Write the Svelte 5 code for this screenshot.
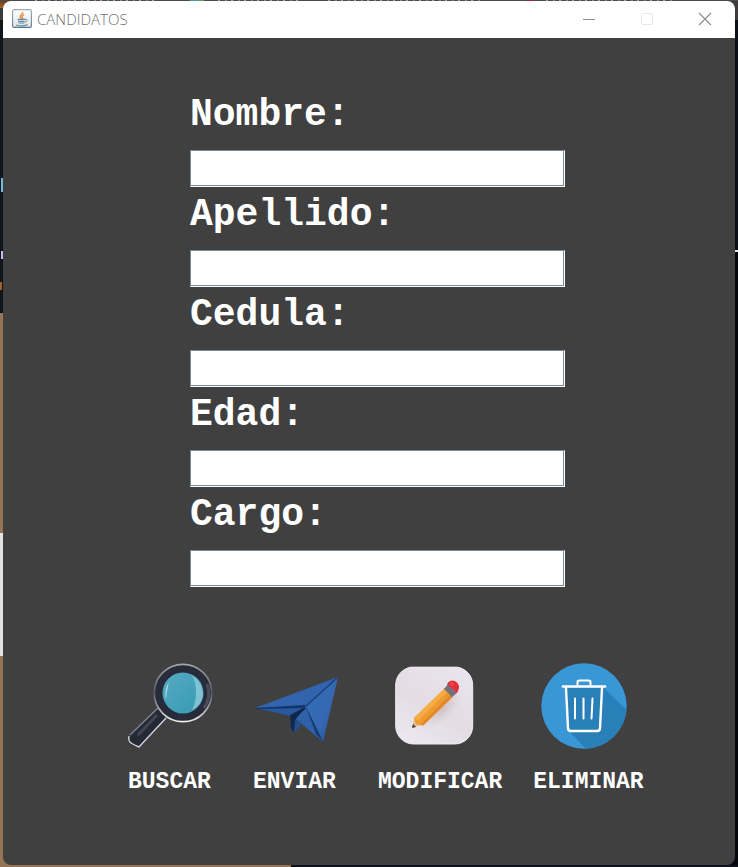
<script>
  const fields = [
    { id: 'nombre', label: 'Nombre:' },
    { id: 'apellido', label: 'Apellido:' },
    { id: 'cedula', label: 'Cedula:' },
    { id: 'edad', label: 'Edad:' },
    { id: 'cargo', label: 'Cargo:' }
  ];
  let values = $state({ nombre: '', apellido: '', cedula: '', edad: '', cargo: '' });
</script>

<div class="desktop">
  <main class="window">
    <header>
      <svg class="java" viewBox="0 0 20 20" aria-hidden="true">
        <defs>
          <linearGradient id="jbg" x1="0" y1="0" x2="0" y2="1">
            <stop offset="0" stop-color="#fff" /><stop offset="1" stop-color="#dfe3e6" />
          </linearGradient>
          <linearGradient id="jbd" x1="0" y1="0" x2="0" y2="1">
            <stop offset="0" stop-color="#9eacb6" /><stop offset="1" stop-color="#54748c" />
          </linearGradient>
        </defs>
        <rect x=".6" y=".6" width="18.8" height="17.8" rx="1.5" fill="url(#jbg)" stroke="url(#jbd)" stroke-width="1.1" />
        <path d="M10.7 3c.9 2-3.4 2.900-2.500 5 .3.800 1 1.400 1.300 2M12 5.800c-2 .8-2.500 1.700-1.600 2.700.6.700.4 1.200-.2 1.700" fill="none" stroke="#e79554" stroke-width="1.500" />
        <path d="M5.500 10.400h8M6 12.400h6.700M6.500 14h5.800M4 16c3 1 8.500.9 11.500-.4" fill="none" stroke="#67899f" stroke-width="1.200" />
        <path d="M13 10.300c3.300-.5 2.500 2.300 0 2.900" fill="none" stroke="#67899f" />
      </svg>
      <h1>CANDIDATOS</h1>
      <div class="controls">
        <button type="button" aria-label="Minimizar">
          <svg viewBox="0 0 14 14"><path d="M1 7.500h12" stroke="#8f8f8f" /></svg>
        </button>
        <button type="button" aria-label="Maximizar" disabled>
          <svg viewBox="0 0 14 14"><rect x="1.500" y="1.500" width="11" height="11" rx="1" fill="none" stroke="#e6e6e6" /></svg>
        </button>
        <button type="button" aria-label="Cerrar">
          <svg viewBox="0 0 14 14"><path d="M1 1l12 12M13 1L1 13" stroke="#8f8f8f" stroke-width="1.200" /></svg>
        </button>
      </div>
    </header>

    <form onsubmit={(e) => e.preventDefault()}>
      <div class="fields">
        {#each fields as f (f.id)}
          <div class="field">
            <label for={f.id}>{f.label}</label>
            <input id={f.id} type="text" autocomplete="off" bind:value={values[f.id]} />
          </div>
        {/each}
      </div>

      <div class="actions">
        <button type="button">
          <svg viewBox="0 0 84 88" aria-hidden="true">
            <defs>
              <linearGradient id="lens" x1="0" y1="0" x2="1" y2="1">
                <stop offset="0" stop-color="#55abc2" /><stop offset="1" stop-color="#3799b1" />
              </linearGradient>
              <linearGradient id="handle" x1="0" y1="0" x2="1" y2="1">
                <stop offset="0" stop-color="#555860" /><stop offset=".3" stop-color="#252a37" /><stop offset=".75" stop-color="#252936" /><stop offset="1" stop-color="#60646f" />
              </linearGradient>
              <linearGradient id="rim" x1="0" y1="0" x2="0" y2="1">
                <stop offset="0" stop-color="#a5a5a9" /><stop offset=".5" stop-color="#555861" /><stop offset="1" stop-color="#eeeeef" />
              </linearGradient>
            </defs>
            <path d="M30 46L2 73q-3 5 0 8 3 5 10 4L38 56z" fill="url(#handle)" />
            <path d="M30 46L2 73" stroke="#85878d" stroke-width="1.200" />
            <path d="M1 74q-1 5 2 7t8 4L38 56" fill="none" stroke="#d5d5d9" stroke-width="1.400" />
            <path d="M29 53L10 73" stroke="#414550" stroke-width="3" />
            <circle cx="55" cy="31" r="28.700" fill="#282b39" stroke="url(#rim)" stroke-width="1.700" />
            <path d="M79 22a26 26 0 0 1-3 24" fill="none" stroke="#4b4d5a" stroke-width="3" />
            <circle cx="55" cy="31" r="20.500" fill="url(#lens)" />
            <path d="M64 13q11 7 11 20-1 10-11 15 4-8 4-18 0-9-4-17z" fill="#7fc2d3" />
            <path d="M41 20q-5 7-3 18 1-12 3-18z" fill="#b4dde6" />
          </svg>
          <span>BUSCAR</span>
        </button>

        <button type="button">
          <svg viewBox="0 0 84 88" aria-hidden="true">
            <defs>
              <linearGradient id="wing" x1="0" y1="0" x2="1" y2="1">
                <stop offset="0" stop-color="#2f70b8" /><stop offset=".6" stop-color="#3568b0" /><stop offset="1" stop-color="#1e4d93" />
              </linearGradient>
            </defs>
            <path d="M2 46L85 15 52 47z" fill="#3164ac" />
            <path d="M2 46l51-2-15 10z" fill="#29599d" />
            <path d="M2 46l51-3v3L2 47z" fill="#123467" />
            <path d="M85 15L53 45l17 35z" fill="url(#wing)" />
            <path d="M38 53l15-9 16 35-25-21z" fill="#2f60a8" />
            <path d="M53 45l17 34-7-7z" fill="#163a71" />
            <path d="M37 53l15-8-9 12-2 14-3-5z" fill="#102953" />
            <path d="M42 58l7 4-8 9z" fill="#234e90" />
            <path d="M53 44L84 16" stroke="#163f79" stroke-width="1.300" />
            <path d="M52 46L38 58" stroke="#0e244b" stroke-width="2" />
          </svg>
          <span>ENVIAR</span>
        </button>

        <button type="button" class="wide">
          <svg viewBox="-17 0 84 88" aria-hidden="true">
            <defs>
              <linearGradient id="tile" x1=".8" y1="0" x2=".2" y2="1">
                <stop offset="0" stop-color="#eae4ed" /><stop offset=".55" stop-color="#e3dce3" /><stop offset="1" stop-color="#ebe8f1" />
              </linearGradient>
              <radialGradient id="shade">
                <stop offset="0" stop-color="#c7b6bb" stop-opacity=".8" /><stop offset="1" stop-color="#ded6dd" stop-opacity="0" />
              </radialGradient>
            </defs>
            <rect x=".7" y="5" width="77" height="77" rx="18" fill="url(#tile)" stroke="#f0edf1" />
            <path d="M15 4.500h47" stroke="#777a7d" />
            <ellipse cx="47" cy="47" rx="29" ry="13" transform="rotate(-42 47 47)" fill="url(#shade)" />
            <path d="M17 66l3-12 8 8z" fill="#e4bd85" />
            <path d="M17 66l1-4 3 3z" fill="#423b38" />
            <path d="M19 56l31-30 8 9-30 29-7-2z" fill="#ef9a31" />
            <path d="M19 56l31-30 3 3-30 30z" fill="#f6ac42" />
            <path d="M28 63l30-29-2-2-29 29z" fill="#df872c" />
            <path d="M49 27l4-5 9 9-5 4z" fill="#74717c" />
            <path d="M52 22q3-5 8-3 7 4 2 12z" fill="#e62c37" />
            <circle cx="57" cy="22" r="2" fill="#f0484e" />
          </svg>
          <span>MODIFICAR</span>
        </button>

        <button type="button">
          <svg viewBox="-8 0 84 88" aria-hidden="true">
            <defs><clipPath id="disc"><circle cx="43" cy="44" r="42.700" /></clipPath></defs>
            <circle cx="43" cy="44" r="42.700" fill="#3997d5" />
            <path d="M25 26h38l27 26v40H50L27 68z" fill="#2980b9" clip-path="url(#disc)" />
            <g fill="none" stroke="#fff" stroke-linecap="round" stroke-linejoin="round">
              <path d="M22 24.500h42" stroke-width="2.700" />
              <path d="M36.500 23v-3q0-1.500 1.500-1.500h10q1.500 0 1.500 1.500v3" stroke-width="2" />
              <path d="M25 26l2 40q0 3 3 3h26q3 0 3-3l2-40" stroke-width="2.400" />
              <path d="M34 36.500v20M42.500 36.500v20M51.500 36.500l-1 20" stroke-width="2" />
            </g>
          </svg>
          <span>ELIMINAR</span>
        </button>
      </div>
    </form>
  </main>
</div>

<style>
  :global(body) { margin: 0; }
  * { box-sizing: border-box; }

  .desktop {
    min-height: 100vh;
    padding: 1px 3px 2px;
    display: flex;
    background:
      linear-gradient(90deg, #957355 0 291px, #10111a 291px) bottom / 100% 2px no-repeat,
      repeating-linear-gradient(90deg, #aaa1a0 0 2px, #51494a 2px 7px, #7f8391 7px 9px, #51494a 9px 13px) 35px 0 / 120px 1px no-repeat,
      linear-gradient(90deg, #4b9ba5 0 10px, #789553 10px 14px) 190px 0 / 14px 1px no-repeat,
      repeating-linear-gradient(90deg, #aaa1a0 0 2px, #51494a 2px 7px, #7f8391 7px 9px, #51494a 9px 13px) 218px 0 / 84px 1px no-repeat,
      repeating-linear-gradient(90deg, #aaa1a0 0 2px, #51494a 2px 7px, #7f8391 7px 9px, #51494a 9px 13px) 328px 0 / 156px 1px no-repeat,
      linear-gradient(#a02c35, #a02c35) 527px 0 / 6px 1px no-repeat,
      repeating-linear-gradient(90deg, #aaa1a0 0 2px, #51494a 2px 7px, #7f8391 7px 9px, #51494a 9px 13px) 546px 0 / 130px 1px no-repeat,
      linear-gradient(#51494a, #51494a) top / 100% 1px no-repeat,
      linear-gradient(#e8e8e8, #e8e8e8) 735px 250px / 3px 2px no-repeat,
      linear-gradient(#70b7e2, #70b7e2) 1px 178px / 2px 14px no-repeat,
      linear-gradient(#c5b9e8, #c5b9e8) 1px 251px / 2px 8px no-repeat,
      linear-gradient(#a76127, #a76127) 0 282px / 2px 8px no-repeat,
      linear-gradient(#5b3a22, #a5662e) 0 0 / 12px 8px no-repeat,
      linear-gradient(#3d3b3c 0 20px, #10141b 20px 313px, #957355 313px 533px, #e1e4e1 533px 656px, #957355 656px) left / 50% 100% no-repeat,
      linear-gradient(#3d3b3c 0 20px, #0a1018 20px 250px, #04070e 250px) right / 50% 100% no-repeat;
  }

  .window {
    flex: 1;
    display: flex;
    flex-direction: column;
    overflow: hidden;
    border-radius: 8px;
    background: #404040;
  }

  header {
    display: flex;
    align-items: center;
    height: 37px;
    padding: 0 1px 2px 9px;
    background: #fff;
  }

  .java { width: 20px; height: 20px; }

  h1 {
    margin: 0 auto 0 5px;
    font: 300 15px/20px "Open Sans", "Noto Sans", sans-serif;
    color: #707070;
  }

  .controls { display: flex; }

  .controls button {
    display: grid;
    place-items: center;
    width: 58px;
    height: 35px;
    padding: 0;
    border: 0;
    background: none;
  }

  .controls svg { width: 14px; height: 14px; }

  form {
    padding: 52px 24px 40px 125px;
    font-family: "Courier New", "Liberation Mono", monospace;
    font-weight: 700;
    color: #fff;
  }

  .fields {
    display: flex;
    flex-direction: column;
    gap: 3px;
    max-width: 437px;
    padding-left: 62px;
  }

  .field {
    display: flex;
    flex-direction: column;
    gap: 10px;
  }

  label { font-size: 38px; line-height: 50px; }

  input {
    width: 100%;
    height: 37px;
    padding: 2px 4px;
    border: 1px solid #7a8a99;
    border-right-color: #fff;
    border-bottom-color: #fff;
    border-radius: 0;
    outline: 0;
    box-shadow: inset -1px -1px #7a8a99;
    background: #fff;
    font: 24px/30px "Courier New", "Liberation Mono", monospace;
  }

  .actions {
    display: flex;
    gap: 41px;
    margin-top: 75px;
  }

  .actions button {
    display: flex;
    flex-direction: column;
    align-items: flex-start;
    gap: 18px;
    padding: 0;
    border: 0;
    background: none;
    color: inherit;
    font: 700 23px/28px "Courier New", "Liberation Mono", monospace;
  }

  .actions .wide { margin-right: -10px; }

  .actions svg {
    width: 84px;
    height: 88px;
    overflow: visible;
  }
</style>
